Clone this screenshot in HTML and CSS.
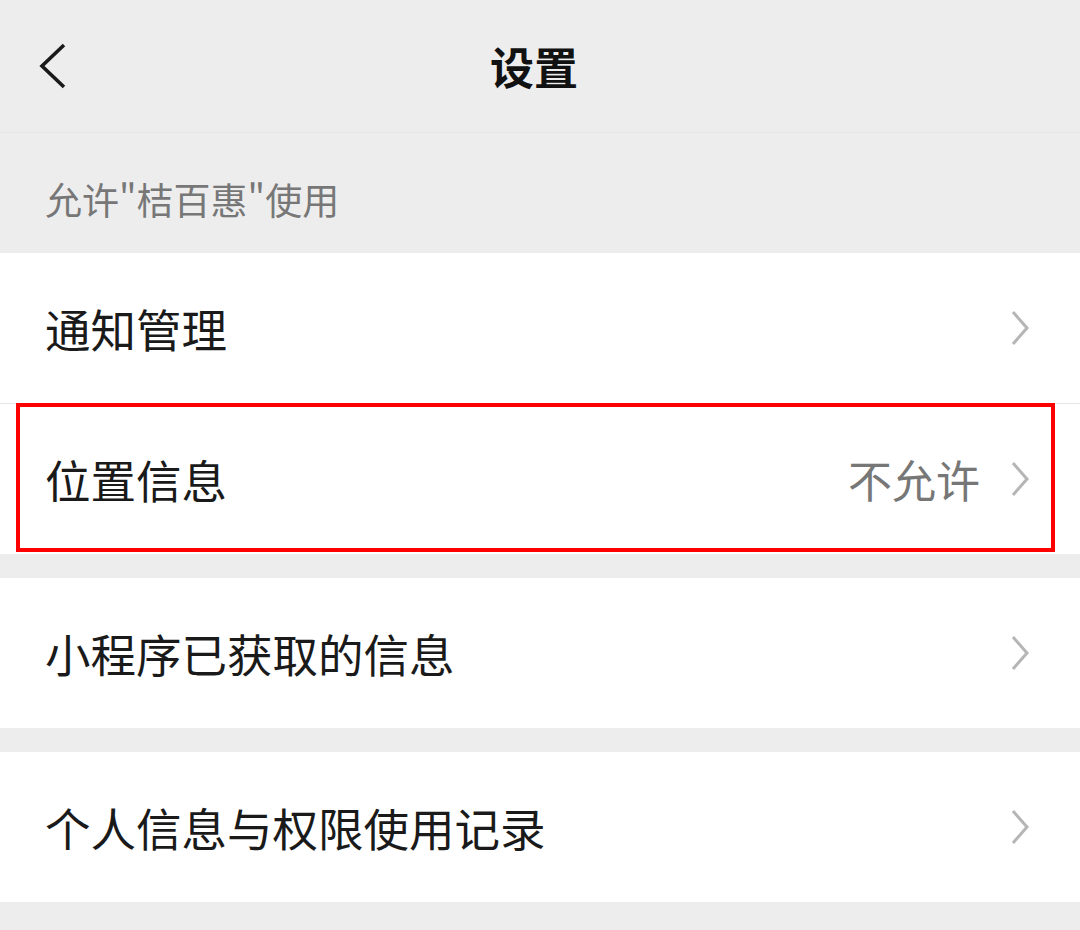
FILE: index.html
```html
<!DOCTYPE html>
<html lang="zh-CN">
<head>
  <meta charset="UTF-8">
  <title>设置</title>
  <link rel="stylesheet" href="styles.css">
</head>
<body>
  <header class="navbar">
    <div class="nav-back">
      <svg width="30" height="46" viewBox="0 0 30 46">
        <polyline points="26,2 4,23 26,44" fill="none" stroke="#1a1a1a" stroke-width="3.6"/>
      </svg>
    </div>
    <h1 class="nav-title">设置</h1>
    <div></div>
  </header>

  <div class="section-label">允许"桔百惠"使用</div>

  <div class="group">
    <div class="cell">
      <span class="cell-title">通知管理</span>
      <span class="cell-right">
        <svg class="arrow" width="20" height="36" viewBox="0 0 20 36"><polyline points="3,2 17,18 3,34" fill="none" stroke="#b5b5b5" stroke-width="3"/></svg>
      </span>
    </div>
    <div class="cell highlighted">
      <span class="cell-title">位置信息</span>
      <span class="cell-right">
        <span class="cell-value">不允许</span>
        <svg class="arrow" width="20" height="36" viewBox="0 0 20 36"><polyline points="3,2 17,18 3,34" fill="none" stroke="#b5b5b5" stroke-width="3"/></svg>
      </span>
      <div class="mark"></div>
    </div>
  </div>

  <div class="group">
    <div class="cell">
      <span class="cell-title">小程序已获取的信息</span>
      <span class="cell-right">
        <svg class="arrow" width="20" height="36" viewBox="0 0 20 36"><polyline points="3,2 17,18 3,34" fill="none" stroke="#b5b5b5" stroke-width="3"/></svg>
      </span>
    </div>
  </div>

  <div class="group">
    <div class="cell">
      <span class="cell-title">个人信息与权限使用记录</span>
      <span class="cell-right">
        <svg class="arrow" width="20" height="36" viewBox="0 0 20 36"><polyline points="3,2 17,18 3,34" fill="none" stroke="#b5b5b5" stroke-width="3"/></svg>
      </span>
    </div>
  </div>
</body>
</html>
```

FILE: styles.css
```css
body {
  margin: 0;
  background: #ededed;
  font-family: "Noto Sans CJK SC", "Noto Sans", sans-serif;
  color: #1a1a1a;
}

.navbar {
  height: 132px;
  display: grid;
  grid-template-columns: 1fr auto 1fr;
  align-items: center;
  border-bottom: 1px solid #e6e6e6;
}

.nav-back {
  padding-left: 38px;
  display: flex;
  align-items: center;
}

.nav-title {
  margin: 0;
  font-size: 44px;
  font-weight: 700;
  color: #111;
  transform: translateX(-6px);
}

.section-label {
  height: 120px;
  display: flex;
  align-items: center;
  padding-left: 45px;
  padding-top: 12px;
  box-sizing: border-box;
  font-size: 37px;
  color: #777;
}

.group {
  background: #fff;
  margin-bottom: 24px;
}

.cell {
  position: relative;
  height: 150px;
  display: flex;
  align-items: center;
  justify-content: space-between;
  padding: 0 50px 0 45px;
}

.cell + .cell {
  border-top: 1px solid #e5e5e5;
}

.cell-title {
  font-size: 45.5px;
  color: #1a1a1a;
}

.cell-right {
  display: flex;
  align-items: center;
  gap: 30px;
}

.cell-value {
  font-size: 44px;
  color: #777;
}

.arrow {
  display: block;
}

.mark {
  position: absolute;
  left: 16px;
  right: 25px;
  top: -1px;
  bottom: 2px;
  border: 4px solid #f00;
}
```
